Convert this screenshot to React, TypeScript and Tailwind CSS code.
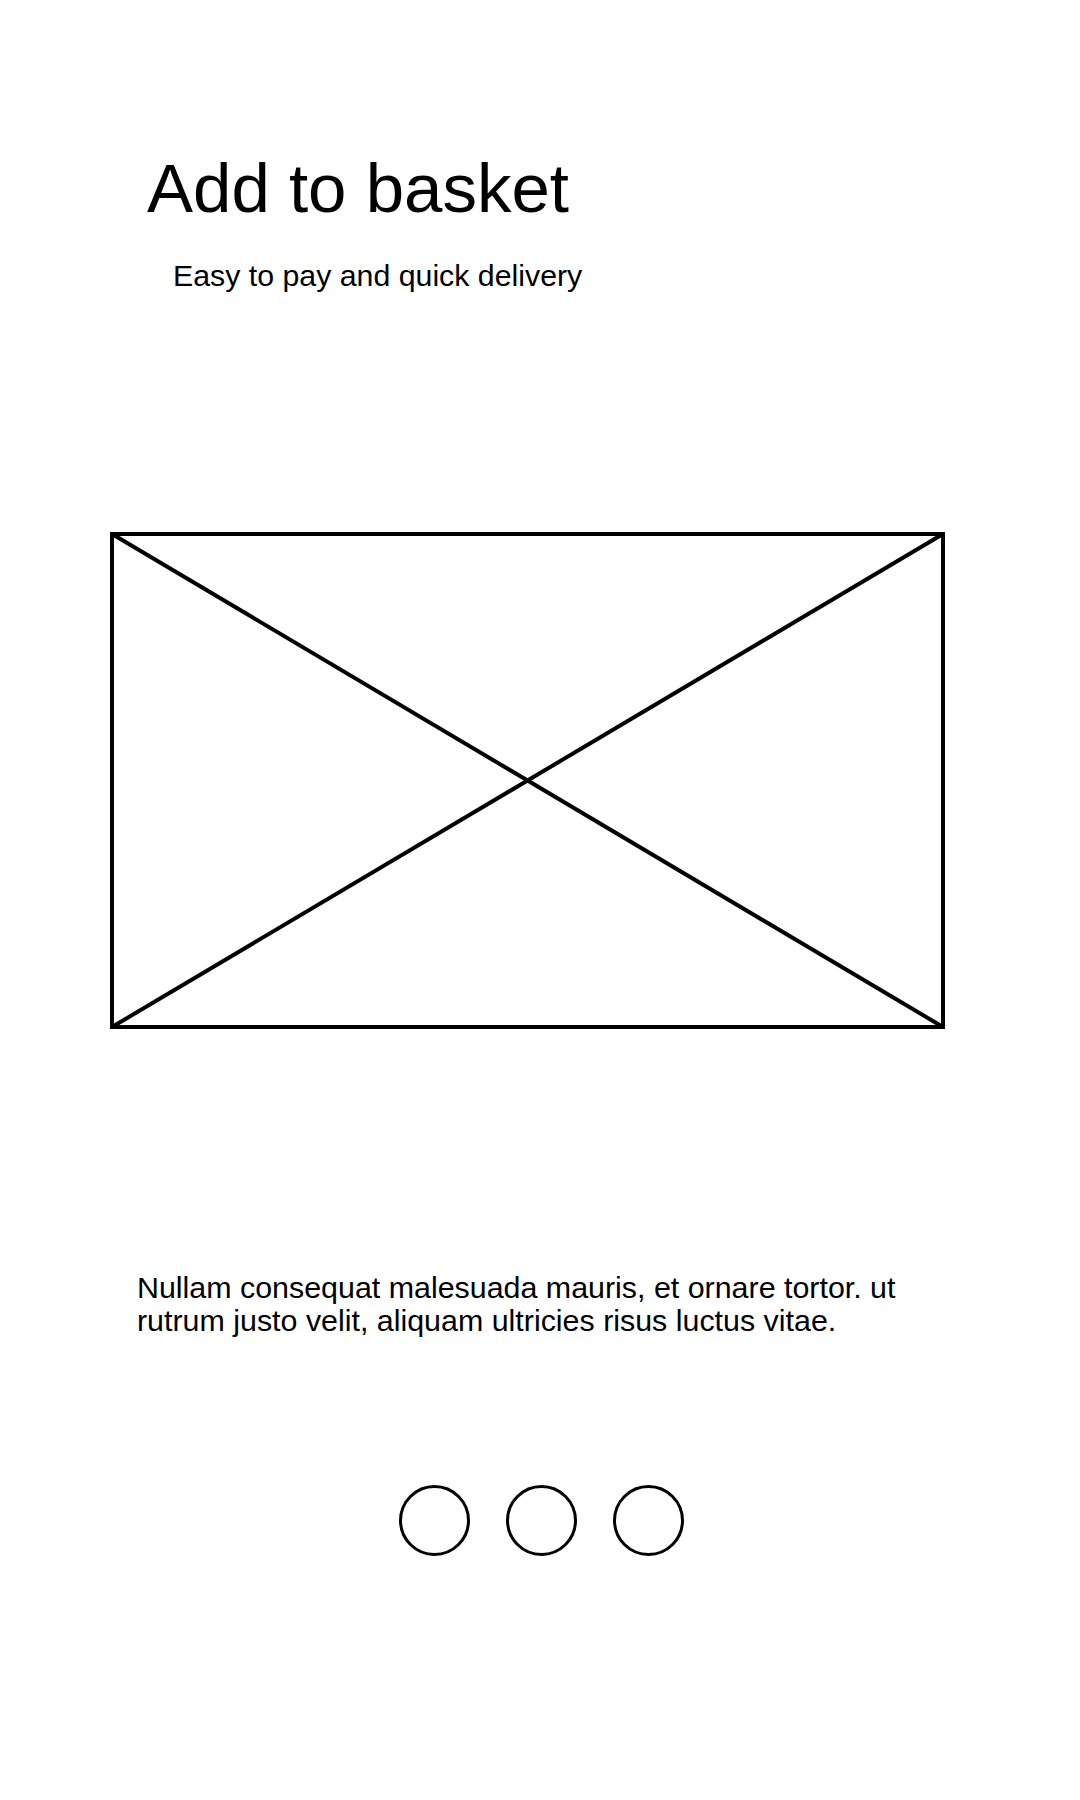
const Placeholder = () => (
    <svg width="835" height="497" viewBox="0 0 835 497" className="block">
        <rect x="2" y="2" width="831" height="493" fill="none" stroke="#000" strokeWidth="4" />
        <line x1="2" y1="2" x2="833" y2="495" stroke="#000" strokeWidth="4" />
        <line x1="833" y1="2" x2="2" y2="495" stroke="#000" strokeWidth="4" />
    </svg>
)

const Dot = () => (
    <div className="w-[71px] h-[71px] rounded-full border-[3px] border-black" />
)

export default function App() {
    return (
        <div
            className="w-[1080px] min-h-[1800px] bg-white text-black flex flex-col"
            style={{ fontFamily: '"Liberation Sans", Arial, sans-serif' }}
        >
            <h1 className="ml-[147px] mt-[155px] text-[69px] leading-[68px]">Add to basket</h1>
            <p className="ml-[173px] mt-[38px] text-[30.3px] leading-[30px]">Easy to pay and quick delivery</p>

            <div className="ml-[110px] mt-[241px]">
                <Placeholder />
            </div>

            <p className="ml-[137px] mt-[242px] w-[800px] text-[30.4px] leading-[33px]">
                Nullam consequat malesuada mauris, et ornare tortor. ut rutrum justo velit, aliquam ultricies risus luctus vitae.
            </p>

            <div className="mt-[148px] flex justify-center gap-[36px] pl-[2px]">
                <Dot />
                <Dot />
                <Dot />
            </div>
        </div>
    )
}
